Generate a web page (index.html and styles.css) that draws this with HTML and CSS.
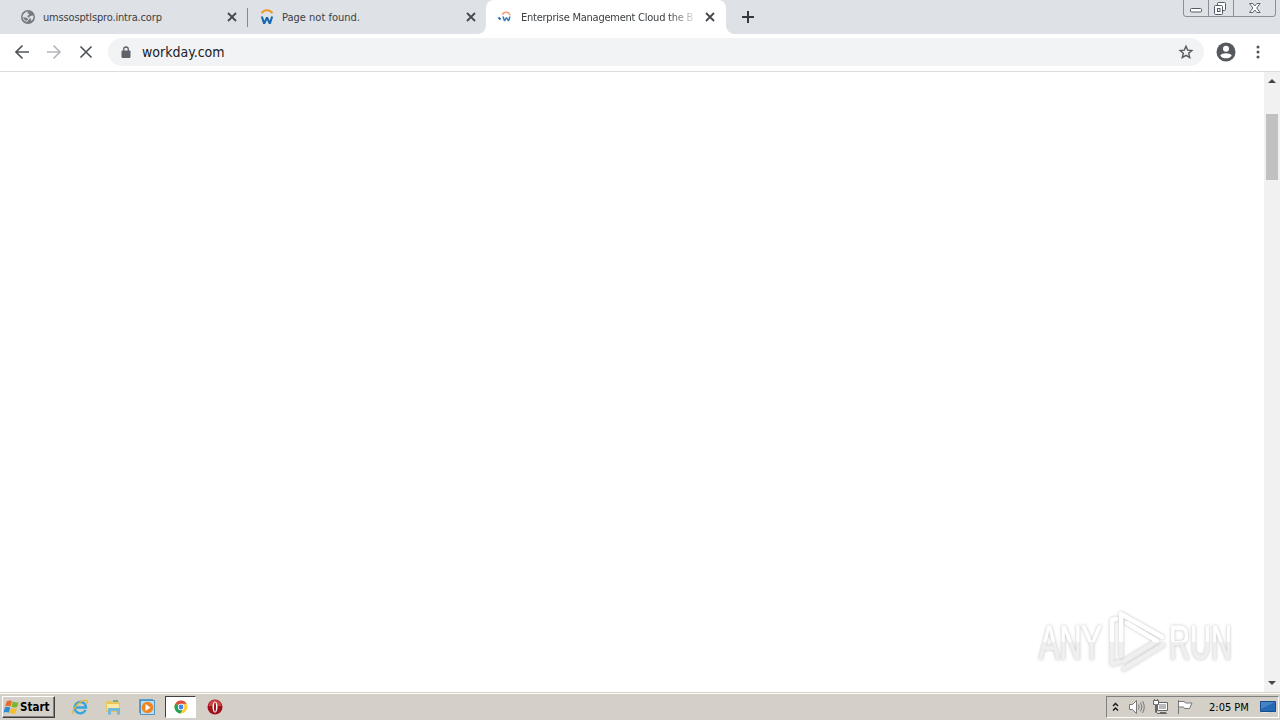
FILE: index.html
```html
<!DOCTYPE html>
<html lang="en">
<head>
    <meta charset="UTF-8">
    <title>Enterprise Management Cloud</title>
    <link rel="stylesheet" href="styles.css">
</head>
<body>
    <!-- Tabs -->
    <div class="tabstrip">
        <div class="tab">
            <svg class="favicon" viewBox="0 0 16 16"><circle cx="8" cy="8" r="7" fill="#757980"/><path d="M2.500 7.500C3 4.500 5.500 2.500 8.500 2.500L7 4.500h2v1.500L7 7l1 1 2 1.500-3 3.500C4 12.500 2.500 10 2.500 7.500zM10 7l3.500-.5c.3 2.500-.5 4.500-2.500 5.500V9.500H9z" fill="#dee1e6"/><path d="M3 8l4 1 1.500 1.500L6 12 4 10z" fill="#757980"/></svg>
            <span class="title t1">umssosptlspro.intra.corp</span>
            <svg class="close" viewBox="0 0 10 10"><path d="M1 1l8 8M9 1L1 9"/></svg>
        </div>
        <div class="tab divided">
            <svg class="favicon" viewBox="0 0 16 17"><path d="M2.400 4.500C4.500 .3 11.500 .3 13.600 4.500" fill="none" stroke="#ea9a28" stroke-width="2.300"/><path d="M2.500 8l2.500 7.500L8 9l3 6.500L13.500 8" fill="none" stroke="#1767b1" stroke-width="2.200" stroke-linejoin="bevel"/></svg>
            <span class="title t2">Page not found.</span>
            <svg class="close" viewBox="0 0 10 10"><path d="M1 1l8 8M9 1L1 9"/></svg>
        </div>
        <div class="tab active">
            <svg class="favicon" viewBox="0 0 16 16"><path d="M4.500 6C5 2.300 11.500 2.300 12 6.500" fill="none" stroke="#efa37b" stroke-width="1.400"/><path d="M5 7.500l1.500 4.500L8.500 8.500l2 3.500L12 7.500" fill="none" stroke="#3979b8" stroke-width="1.500" stroke-linejoin="bevel"/><path d="M.5 8.500l2 2" stroke="#1767b1" stroke-width="1.800"/></svg>
            <span class="title t3">Enterprise Management Cloud the B</span>
            <svg class="close" viewBox="0 0 10 10"><path d="M1 1l8 8M9 1L1 9"/></svg>
        </div>
        <svg class="newtab" viewBox="0 0 12 12"><path d="M6 0v12M0 6h12"/></svg>
        <div class="window-buttons">
            <svg width="96" height="17" viewBox="0 0 96 17" fill="none">
                <path d="M.5 0v14q0 2.500 2.500 2.500h87q2.500 0 2.500-2.500V0M25.500 0v16M50.500 0v16" stroke="#8b8f97"/>
                <rect x="7.500" y="8.500" width="11" height="3.500" rx="1" fill="#fff" stroke="#555b66"/>
                <rect x="34.500" y="2.500" width="8" height="8" rx="1" fill="#fff" stroke="#555b66"/>
                <rect x="31.500" y="5.500" width="8" height="9" rx="1" fill="#fff" stroke="#555b66"/>
                <rect x="34.500" y="8.500" width="2.500" height="3" stroke="#555b66"/>
                <path d="M66.500 3.500h3.300l2 2.500 2-2.500h3.300L73.700 8l3.400 4.500h-3.300L71.800 10l-2 2.500h-3.300L69.900 8z" fill="#fff" stroke="#5f646d"/>
            </svg>
        </div>
    </div>

    <!-- Toolbar -->
    <div class="toolbar">
        <svg class="nav" viewBox="0 0 16 16"><path d="M15 8H2M8.500 1.500L2 8l6.500 6.500"/></svg>
        <svg class="nav disabled" viewBox="0 0 16 16"><path d="M1 8h13M7.500 1.500L14 8l-6.500 6.500"/></svg>
        <svg class="nav" viewBox="0 0 16 16"><path d="M2.500 2.500l11 11M13.500 2.500l-11 11"/></svg>
        <div class="omnibox">
            <svg class="lock" viewBox="0 0 10 13"><rect x=".5" y="4.500" width="9" height="7.500" rx="1" fill="#5f6368"/><path d="M2.700 5V3.300a2.300 2.300 0 0 1 4.600 0V5" fill="none" stroke="#5f6368" stroke-width="1.300"/></svg>
            <span class="url">workday.com</span>
            <svg class="star" viewBox="0 0 16 16"><path d="M8 2.200l1.700 3.900 4.200.4-3.200 2.800 1 4.200L8 11.300l-3.700 2.200 1-4.200-3.200-2.800 4.200-.4z" fill="none" stroke="#55595e" stroke-width="1.400"/></svg>
        </div>
        <svg class="avatar" viewBox="0 0 20 20"><circle cx="10" cy="10" r="9.500" fill="#55595e"/><circle cx="10" cy="6.800" r="3" fill="#fff"/><path d="M4.200 13.500C6 10.500 14 10.500 15.800 13.500 13.500 17.300 6.500 17.300 4.200 13.500z" fill="#fff"/></svg>
        <svg class="menu" viewBox="0 0 4 14"><circle cx="2" cy="2" r="1.500"/><circle cx="2" cy="7" r="1.500"/><circle cx="2" cy="12" r="1.500"/></svg>
    </div>

    <!-- Page -->
    <div class="page">
        <div class="scrollbar">
            <svg viewBox="0 0 16 17"><path d="M4 11l4-4 4 4z"/></svg>
            <div class="thumb"></div>
            <svg viewBox="0 0 16 17"><path d="M4 9l4 4 4-4z"/></svg>
        </div>
        <svg class="watermark" viewBox="0 0 210 70">
            <defs>
                <linearGradient id="fade" gradientUnits="userSpaceOnUse" x1="0" y1="0" x2="0" y2="70">
                    <stop offset="0.520" stop-color="#fff"/>
                    <stop offset="0.520" stop-color="#efefef"/>
                </linearGradient>
            </defs>
            <text x="9" y="53" textLength="63" lengthAdjust="spacingAndGlyphs" fill="url(#fade)" stroke="url(#fade)">ANY</text>
            <g fill="none" stroke="url(#fade)" stroke-width="4.500" stroke-linejoin="round" stroke-linecap="round">
                <path d="M86 13l-4 1v44l8-2"/>
                <path d="M91 50V8l41 23"/>
                <path d="M97 17v0l30 18-33 20"/>
                <path d="M94 63l39-24"/>
            </g>
            <text x="139" y="53" textLength="63" lengthAdjust="spacingAndGlyphs" fill="url(#fade)" stroke="url(#fade)">RUN</text>
        </svg>
    </div>

    <!-- Taskbar -->
    <div class="taskbar">
        <div class="start">
            <svg viewBox="0 0 18 16"><path d="M4 2q3-2 5.500 0L8 7.500Q5 6 2.300 7.500z" fill="#e96b29"/><path d="M10.500 2.300q2.500 1.500 6 .3L15 8q-3 1-6-.2z" fill="#79b52d"/><path d="M2 8.500q3-1.500 5.700.2L6.200 14Q3 12.500.5 14z" fill="#318bd0"/><path d="M8.700 9q3 1.400 6 .3l-1.500 5.300q-3 1-6-.3z" fill="#f6bd24"/></svg>
            <span>Start</span>
        </div>
        <div class="launch">
            <svg viewBox="0 0 18 18"><path d="M14.500 12A5.700 5.700 0 1 1 15 9.500H5" fill="none" stroke="#38a4dc" stroke-width="2.400"/><path d="M2.500 16C-1 13 9 1.500 15.500 2.500q1.500.5.500 3" fill="none" stroke="#e8b72d" stroke-width="1.300"/></svg>
        </div>
        <div class="launch">
            <svg viewBox="0 0 18 18"><path d="M2 3h5l1 1h8v10H2z" fill="#e9c65c"/><path d="M3 6h12v6H3z" fill="#fae9a5"/><path d="M4 16.500V10h12v6.500h-3V13H7v3.500z" fill="#71b8d9"/><path d="M9 3h5" stroke="#5ca564" stroke-width="1.500"/></svg>
        </div>
        <div class="launch">
            <svg viewBox="0 0 18 18"><rect x="1.500" y="1.500" width="13" height="13" fill="#fff" stroke="#569fcf"/><rect x="2.500" y="2.500" width="14" height="14" fill="#b7def2" stroke="#4f96c5"/><circle cx="9.500" cy="9.500" r="5.800" fill="#ef851f"/><path d="M7.500 6l5 3.500-5 3.500z" fill="#fff"/></svg>
        </div>
        <div class="launch pressed">
            <svg viewBox="0 0 18 18"><circle cx="9" cy="9" r="6.500" fill="#ffcd40"/><path d="M9 9L3.300 5.800A6.500 6.500 0 0 1 14.700 5.800H9z" fill="#de4d3f"/><path d="M3.300 5.800A6.500 6.500 0 0 0 8.500 15.500L11 11 9 9z" fill="#24a15e"/><circle cx="9" cy="9" r="3.200" fill="#fff"/><circle cx="9" cy="9" r="2.400" fill="#4284f2"/></svg>
        </div>
        <div class="launch">
            <svg viewBox="0 0 18 18"><circle cx="9" cy="9" r="7.500" fill="#a01119"/><path d="M2.500 8a6.500 6 0 0 1 13 0z" fill="#cf4447"/><ellipse cx="9" cy="9" rx="2.500" ry="5.500" fill="#fff"/><ellipse cx="9" cy="9" rx="1" ry="4.800" fill="#9d1018"/></svg>
        </div>
        <div class="tray">
            <svg width="10" height="12" viewBox="0 0 10 12" fill="none" stroke="#111" stroke-width="1.400"><path d="M2 5l2.500-2.500L7 5M2 9.500L4.500 7 7 9.500"/></svg>
            <svg class="sound" width="18" height="16" viewBox="0 0 18 16" stroke="#777"><path d="M1.500 5.500h3l4-4v13l-4-4h-3z" fill="#fff"/><path d="M10.500 5.500q1.500 2.500 0 5M12.500 3.500q3 4.500 0 9M14.500 2q3.500 6 0 12" fill="none"/></svg>
            <svg class="network" width="18" height="18" viewBox="0 0 18 18" fill="#fff" stroke="#666"><path d="M5.500 4.500h10v8h-10zM8 14.500h6M5 15.500h10"/><path d="M7 6h7v5H7z" fill="#b9b9b9" stroke="none"/><path d="M2.500 1v2M5.500 1v2M1.500 2.500h5v4h-2v8h-1v-8h-2z"/></svg>
            <svg class="flag" width="18" height="16" viewBox="0 0 18 16" fill="#fff" stroke="#777"><path d="M2.500 1v14M2.500 2.500h6l1 1.500h6.500l-2.500 5.500h-5l-1-1.500h-5z"/></svg>
            <span class="clock">2:05 PM</span>
            <svg class="desktop" width="16" height="14" viewBox="0 0 16 14"><path d="M.5 1.500h15v10H.5z" fill="#2469b5" stroke="#174c8c"/><path d="M1 2h14L1 9z" fill="#4583c4"/><path d="M2 12.500h6" stroke="#e6e6e6"/></svg>
        </div>
    </div>
</body>
</html>
```
FILE: styles.css
```css
* {
    box-sizing: border-box;
}

body {
    margin: 0;
    width: 1280px;
    height: 720px;
    display: flex;
    flex-direction: column;
    overflow: hidden;
    background: #fff;
    font-family: "DejaVu Sans Condensed", "DejaVu Sans", sans-serif;
    font-size: 11px;
    color: #3c4043;
}

svg {
    display: block;
    flex: none;
}

/* Tabs */
.tabstrip {
    height: 34px;
    flex: none;
    display: flex;
    padding-left: 8px;
    background: #dee1e6;
}

.tab {
    position: relative;
    width: 239px;
    display: flex;
    align-items: center;
    padding: 0 10px 0 12px;
}

.tab.active {
    width: 240px;
    background: #fff;
    border-radius: 8px 8px 0 0;
}

/* Flared feet of the active tab */
.tab.active::before,
.tab.active::after {
    content: "";
    position: absolute;
    bottom: 0;
    width: 8px;
    height: 8px;
}

.tab.active::before {
    left: -8px;
    background: radial-gradient(circle at 0 0, #dee1e6 7.5px, #fff 8px);
}

.tab.active::after {
    right: -8px;
    background: radial-gradient(circle at 100% 0, #dee1e6 7.5px, #fff 8px);
}

.divided::before {
    content: "";
    position: absolute;
    left: 0;
    top: 8px;
    width: 1px;
    height: 19px;
    background: #85888e;
}

.favicon {
    width: 16px;
    height: 16px;
    margin-right: 7px;
}

.title {
    width: 172px;
    white-space: nowrap;
}

.t1 {
    letter-spacing: -0.16px;
}

.t3 {
    letter-spacing: -0.24px;
    -webkit-mask-image: linear-gradient(to right, #000 148px, transparent 178px);
    mask-image: linear-gradient(to right, #000 148px, transparent 178px);
}

.close {
    width: 10px;
    height: 10px;
    margin-left: 12px;
    fill: none;
    stroke: #45494e;
    stroke-width: 1.8;
}

.newtab {
    width: 12px;
    height: 12px;
    margin: 11px 0 0 16px;
    stroke: #35393e;
    stroke-width: 2;
}

.window-buttons {
    margin-left: auto;
    width: 97px;
}

/* Toolbar */
.toolbar {
    height: 38px;
    flex: none;
    display: flex;
    align-items: center;
    padding: 0 20px 1px 14px;
    border-bottom: 1px solid #dadce0;
}

.nav {
    width: 16px;
    height: 16px;
    margin-right: 16px;
    fill: none;
    stroke: #505459;
    stroke-width: 1.7;
}

.nav.disabled {
    stroke: #b5b7ba;
}

.omnibox {
    width: 1096px;
    height: 28px;
    margin-left: -2px;
    display: flex;
    align-items: center;
    padding: 0 10px 0 13px;
    border-radius: 14px;
    background: #f1f3f4;
}

.lock {
    width: 10px;
    height: 13px;
    margin-right: 11px;
}

.url {
    font-size: 14px;
    color: #202124;
}

.star {
    width: 16px;
    height: 16px;
    margin-left: auto;
}

.avatar {
    width: 20px;
    height: 20px;
    margin-left: 12px;
}

.menu {
    width: 4px;
    height: 14px;
    margin-left: 20px;
    fill: #505459;
}

/* Page */
.page {
    position: relative;
    height: 620px;
    flex: none;
    display: flex;
    justify-content: flex-end;
}

.scrollbar {
    width: 16px;
    display: flex;
    flex-direction: column;
    background: #f1f1f1;
    fill: #44474a;
}

.scrollbar svg {
    width: 16px;
    height: 17px;
}

.scrollbar svg:last-child {
    margin-bottom: 3px;
}

.thumb {
    width: 12px;
    height: 66px;
    margin: 25px 2px auto;
    background: #c1c1c1;
}

.watermark {
    position: absolute;
    left: 1030px;
    top: 534px;
    width: 210px;
    height: 70px;
    overflow: visible;
    filter: drop-shadow(0 0 1.5px rgba(0, 0, 0, 0.25));
    font-family: "Liberation Sans", sans-serif;
    font-size: 49px;
}

/* Taskbar */
.taskbar {
    height: 28px;
    flex: none;
    display: flex;
    align-items: center;
    padding: 2px 0 0 2px;
    background: #d4d0c8;
    box-shadow: inset 0 1px #d4d0c8, inset 0 2px #fff;
    color: #000;
}

.start {
    width: 53px;
    height: 22px;
    margin-right: 9px;
    display: flex;
    align-items: center;
    border: 1px solid;
    border-color: #fff #404040 #404040 #fff;
    box-shadow: inset -1px -1px #808080;
    font-weight: bold;
    font-size: 11.5px;
}

.start svg {
    width: 17px;
    height: 16px;
}

.launch {
    width: 31px;
    height: 22px;
    margin-right: 2.8px;
    display: flex;
    align-items: center;
    justify-content: center;
}

.launch svg {
    width: 18px;
    height: 18px;
}

.launch.pressed {
    border: 1px solid;
    border-color: #404040 #fff #fff #404040;
    background: #fff;
}

.tray {
    width: 173px;
    height: 22px;
    margin: 0 1px 0 auto;
    display: flex;
    align-items: center;
    padding-left: 4px;
    border: 1px solid;
    border-color: #808080 #fff #fff #808080;
}

.sound {
    margin-left: 7px;
}

.network {
    margin-left: 6px;
}

.flag {
    margin-left: 6px;
}

.clock {
    width: 40px;
    margin-left: 15px;
    white-space: nowrap;
}

.desktop {
    margin-left: 11px;
}
```
